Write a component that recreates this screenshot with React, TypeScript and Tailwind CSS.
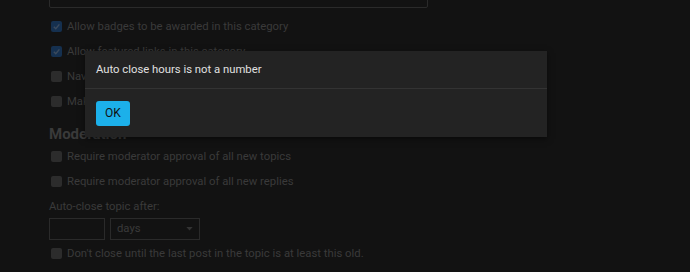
function Check({ checked }: { checked?: boolean }) {
  return (
    <span
      className={
        "w-[11px] h-[11px] rounded-[2px] flex items-center justify-center shrink-0 " +
        (checked ? "bg-[#15304f]" : "bg-[#2c2c2c]")
      }
    >
      {checked && (
        <svg width="9" height="9" viewBox="0 0 10 10">
          <path d="M2 5.2 L4.2 7.4 L8.2 2.6" stroke="#3c4a5c" strokeWidth="1.6" fill="none" />
        </svg>
      )}
    </span>
  );
}

function Row({ label, checked }: { label: string; checked?: boolean }) {
  return (
    <div className="flex items-center gap-[5px] h-[25px] pl-[2px]">
      <Check checked={checked} />
      <span className="pt-[1px]">{label}</span>
    </div>
  );
}

export default function App() {
  return (
    <div
      className="relative w-[690px] h-[272px] overflow-hidden bg-[#121212] text-[#3a3a3a] text-[11.3px]"
      style={{ fontFamily: "Roboto, 'Noto Sans', sans-serif" }}
    >
      <div className="pl-[49px] flex flex-col">
        <div className="w-[379px] h-[30px] -mt-[22px] border border-[#2a2a2a] rounded-[2px] px-3 flex items-center">
          Normal
        </div>
        <div className="mt-[6px]">
          <Row label="Allow badges to be awarded in this category" checked />
          <Row label="Allow featured links in this category" checked />
          <Row label="Navigation bar shows this category" />
          <Row label="Make this category visible to everyone" />
        </div>
        <h3 className="text-[15px] font-bold h-[20px] leading-[20px] mt-[10px]">Moderation</h3>
        <div>
          <Row label="Require moderator approval of all new topics" />
          <Row label="Require moderator approval of all new replies" />
        </div>
        <div className="h-[22px] leading-[22px] mt-[2px]">Auto-close topic after:</div>
        <div className="flex gap-[5px] h-[22px]">
          <div className="w-[56px] border border-[#2a2a2a]" />
          <div className="w-[90px] border border-[#2a2a2a] flex items-center justify-between pl-[6px] pr-[6px]">
            <span>days</span>
            <svg width="7" height="4" viewBox="0 0 8 5">
              <path d="M0 0 L8 0 L4 4.5 Z" fill="#333" />
            </svg>
          </div>
        </div>
        <div className="mt-[1px]">
          <Row label="Don't close until the last post in the topic is at least this old." />
        </div>
      </div>

      <div className="absolute left-[85px] top-[51px] w-[462px] bg-[#232323] shadow-[0_2px_6px_rgba(0,0,0,0.5)]">
        <div className="h-[38px] px-[11px] pt-[2px] flex items-center text-[#e0e0e0] border-b border-[#333]">
          Auto close hours is not a number
        </div>
        <div className="h-[48px] px-[11px] flex items-center">
          <button className="h-[25px] px-[9px] rounded-[3px] bg-[#1cb0ea] text-[#111] text-[12px]">
            OK
          </button>
        </div>
      </div>
    </div>
  );
}
